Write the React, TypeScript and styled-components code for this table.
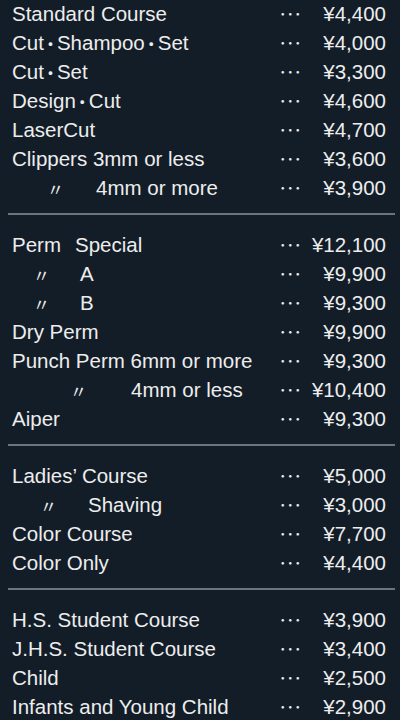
import React from "react";
import styled, { createGlobalStyle } from "styled-components";

const Global = createGlobalStyle`
  html, body { margin: 0; padding: 0; background: #131d28; }
  body { overflow: hidden; }
`;

const Page = styled.div`
  width: 400px;
  height: 720px;
  background: #131d28;
  color: #ededed;
  font-family: "Liberation Sans", "Noto Sans CJK JP", sans-serif;
  font-size: 20.5px;
  overflow: hidden;
`;

const List = styled.div`
  margin-top: -1px;
  display: flex;
  flex-direction: column;
`;

const Section = styled.section`
  padding: 15px 0 11px;
  &:first-child { padding-top: 0; }
`;

const Divider = styled.hr`
  margin: 0 5px 0 8px;
  border: none;
  height: 2px;
  background: #6c747c;
`;

const Row = styled.div`
  display: grid;
  grid-template-columns: 1fr 31px 76px;
  align-items: center;
  height: 29px;
  line-height: 29px;
  padding: 0 14px 0 12px;
  white-space: nowrap;
`;

const Name = styled.span`
  display: flex;
  align-items: center;
  height: 29px;
`;

const Mid = styled.span`
  display: inline-block;
  font-family: "Noto Sans CJK JP", sans-serif;
  font-size: 22px;
  line-height: 29px;
  height: 29px;
  margin: 0 1px;
`;

const Ditto = styled.span<{ $indent: number }>`
  margin-left: ${(p) => p.$indent}px;
  width: 12px;
  font-family: "Noto Sans CJK JP", sans-serif;
  font-size: 17px;
  line-height: 29px;
  transform: translateY(1px);
`;

const Sub = styled.span<{ $gap: number }>`
  margin-left: ${(p) => p.$gap}px;
`;

const Dots = styled.span`
  font-family: "Noto Sans CJK JP", sans-serif;
  font-size: 15px;
  line-height: 29px;
`;

const Price = styled.span`
  text-align: right;
`;

type Item = { name?: string; ditto?: [number, number, string]; prefix?: [string, number, string]; price: string };

const sections: Item[][] = [
  [
    { name: "Standard Course", price: "¥4,400" },
    { name: "Cut･Shampoo･Set", price: "¥4,000" },
    { name: "Cut･Set", price: "¥3,300" },
    { name: "Design･Cut", price: "¥4,600" },
    { name: "LaserCut", price: "¥4,700" },
    { name: "Clippers 3mm or less", price: "¥3,600" },
    { ditto: [35, 37, "4mm or more"], price: "¥3,900" },
  ],
  [
    { prefix: ["Perm", 14, "Special"], price: "¥12,100" },
    { ditto: [21, 35, "A"], price: "¥9,900" },
    { ditto: [21, 35, "B"], price: "¥9,300" },
    { name: "Dry Perm", price: "¥9,900" },
    { name: "Punch Perm 6mm or more", price: "¥9,300" },
    { ditto: [58, 49, "4mm or less"], price: "¥10,400" },
    { name: "Aiper", price: "¥9,300" },
  ],
  [
    { name: "Ladies’ Course", price: "¥5,000" },
    { ditto: [28, 36, "Shaving"], price: "¥3,000" },
    { name: "Color Course", price: "¥7,700" },
    { name: "Color Only", price: "¥4,400" },
  ],
  [
    { name: "H.S. Student Course", price: "¥3,900" },
    { name: "J.H.S. Student Course", price: "¥3,400" },
    { name: "Child", price: "¥2,500" },
    { name: "Infants and Young Child", price: "¥2,900" },
  ],
];

function withDots(text: string) {
  const parts = text.split("･");
  return parts.map((p, i) => (
    <React.Fragment key={i}>
      {i > 0 && <Mid>･</Mid>}
      {p}
    </React.Fragment>
  ));
}

function renderName(it: Item) {
  if (it.ditto) {
    const [indent, gap, text] = it.ditto;
    return (
      <Name>
        <Ditto $indent={indent}>〃</Ditto>
        <Sub $gap={gap}>{text}</Sub>
      </Name>
    );
  }
  if (it.prefix) {
    const [a, gap, b] = it.prefix;
    return (
      <Name>
        {a}
        <Sub $gap={gap}>{b}</Sub>
      </Name>
    );
  }
  return <Name>{withDots(it.name || "")}</Name>;
}

export default function App() {
  return (
    <Page>
      <Global />
      <List>
        {sections.map((sec, i) => (
          <React.Fragment key={i}>
            {i > 0 && <Divider />}
            <Section>
              {sec.map((it, j) => (
                <Row key={j}>
                  {renderName(it)}
                  <Dots>･･･</Dots>
                  <Price>{it.price}</Price>
                </Row>
              ))}
            </Section>
          </React.Fragment>
        ))}
      </List>
    </Page>
  );
}
